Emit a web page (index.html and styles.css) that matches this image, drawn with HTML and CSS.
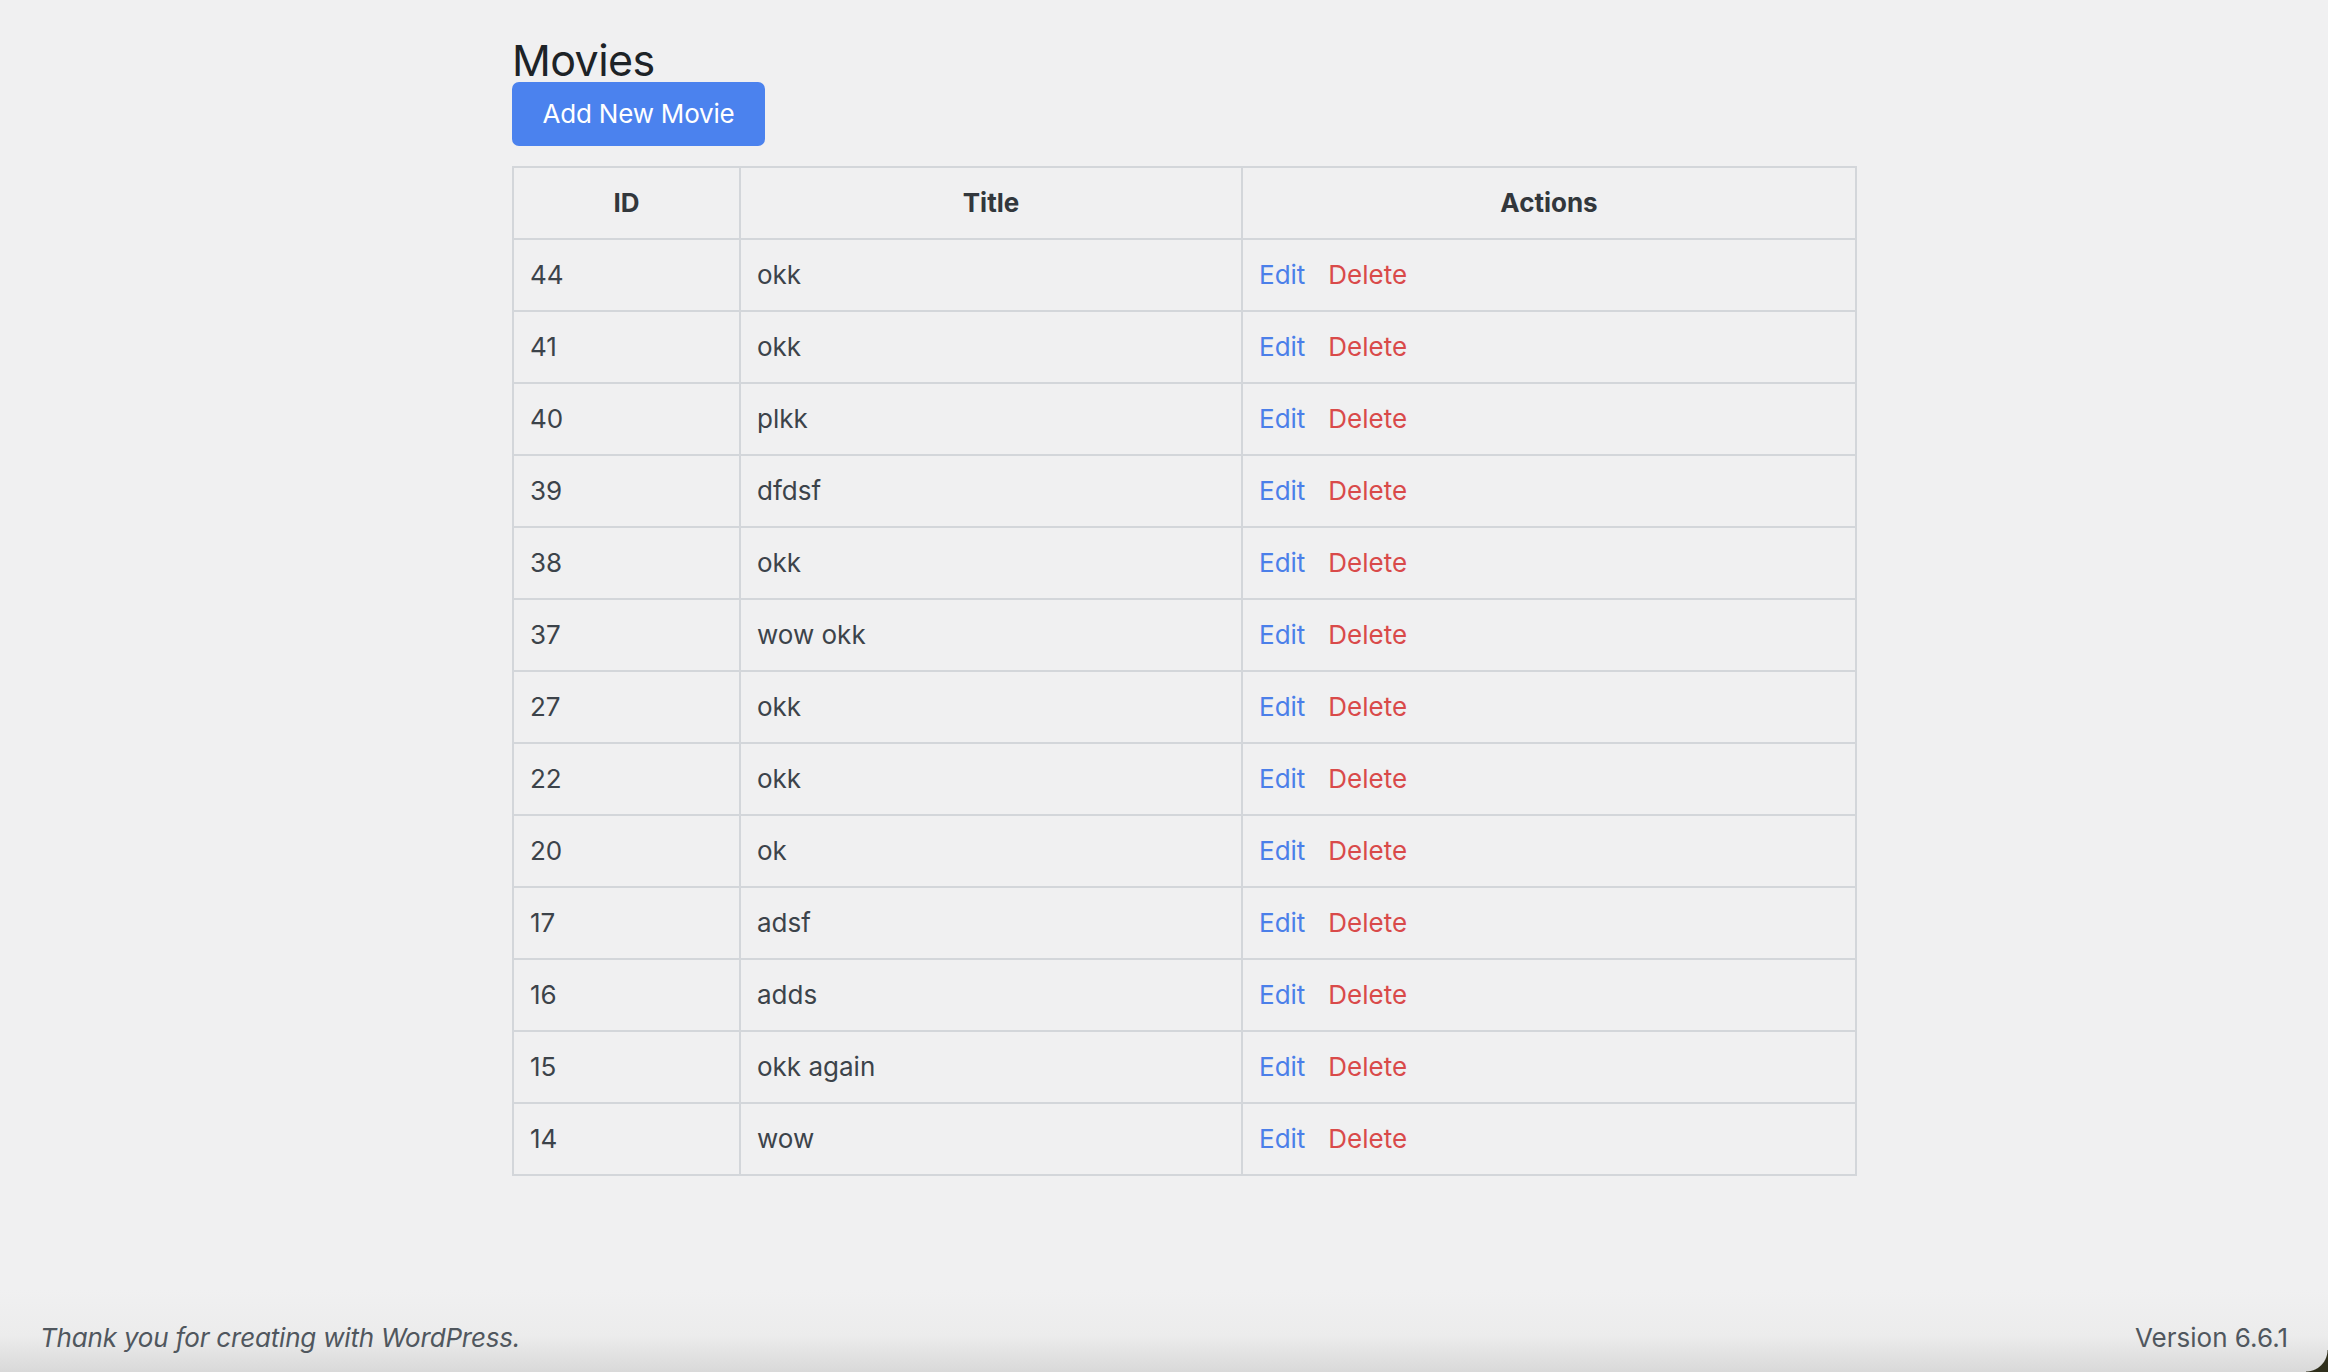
FILE: index.html
```html
<!DOCTYPE html>
<html lang="en">
<head>
<meta charset="utf-8">
<title>Movies</title>
<link rel="stylesheet" href="styles.css">
</head>
<body>
<main class="wrap">
  <h1 class="page-title">Movies</h1>
  <a class="btn-primary" href="#">Add New Movie</a>
  <table class="movies">
    <colgroup>
      <col class="c-id">
      <col class="c-title">
      <col class="c-actions">
    </colgroup>
    <thead>
      <tr><th>ID</th><th>Title</th><th>Actions</th></tr>
    </thead>
    <tbody>
      <tr><td>44</td><td>okk</td><td><a class="edit" href="#">Edit</a><a class="delete" href="#">Delete</a></td></tr>
      <tr><td>41</td><td>okk</td><td><a class="edit" href="#">Edit</a><a class="delete" href="#">Delete</a></td></tr>
      <tr><td>40</td><td>plkk</td><td><a class="edit" href="#">Edit</a><a class="delete" href="#">Delete</a></td></tr>
      <tr><td>39</td><td>dfdsf</td><td><a class="edit" href="#">Edit</a><a class="delete" href="#">Delete</a></td></tr>
      <tr><td>38</td><td>okk</td><td><a class="edit" href="#">Edit</a><a class="delete" href="#">Delete</a></td></tr>
      <tr><td>37</td><td>wow okk</td><td><a class="edit" href="#">Edit</a><a class="delete" href="#">Delete</a></td></tr>
      <tr><td>27</td><td>okk</td><td><a class="edit" href="#">Edit</a><a class="delete" href="#">Delete</a></td></tr>
      <tr><td>22</td><td>okk</td><td><a class="edit" href="#">Edit</a><a class="delete" href="#">Delete</a></td></tr>
      <tr><td>20</td><td>ok</td><td><a class="edit" href="#">Edit</a><a class="delete" href="#">Delete</a></td></tr>
      <tr><td>17</td><td>adsf</td><td><a class="edit" href="#">Edit</a><a class="delete" href="#">Delete</a></td></tr>
      <tr><td>16</td><td>adds</td><td><a class="edit" href="#">Edit</a><a class="delete" href="#">Delete</a></td></tr>
      <tr><td>15</td><td>okk again</td><td><a class="edit" href="#">Edit</a><a class="delete" href="#">Delete</a></td></tr>
      <tr><td>14</td><td>wow</td><td><a class="edit" href="#">Edit</a><a class="delete" href="#">Delete</a></td></tr>
    </tbody>
  </table>
</main>
<footer class="footer">
  <p class="thanks">Thank you for creating with WordPress.</p>
  <p class="version">Version 6.6.1</p>
</footer>
<div class="corner"></div>
</body>
</html>
```

FILE: styles.css
```css
html, body {
  margin: 0;
  padding: 0;
}
body {
  background: #f0f0f1;
  font-family: Inter, "Noto Sans", "Liberation Sans", sans-serif;
  font-size: 26px;
  line-height: 38px;
  color: #3c434a;
  min-height: 1372px;
  display: flex;
  flex-direction: column;
  position: relative;
  overflow: hidden;
}
.wrap {
  padding: 37px 0 0 512px;
  display: flex;
  flex-direction: column;
  align-items: flex-start;
}
.page-title {
  margin: 0;
  font-size: 43px;
  line-height: 45px;
  letter-spacing: -0.6px;
  font-weight: 400;
  color: #1d2327;
  padding-top: 1px;
  height: 44px;
}
.btn-primary {
  display: inline-block;
  box-sizing: border-box;
  width: 253px;
  height: 64px;
  padding: 13px 0;
  text-align: center;
  background: #4b82ee;
  color: #fff;
  border-radius: 7px;
  text-decoration: none;
  font-size: 26px;
  line-height: 38px;
  letter-spacing: -0.2px;
}
.movies {
  margin-top: 20px;
  border-collapse: collapse;
  table-layout: fixed;
  width: 1343px;
  border: 2px solid #d3d6da;
}
.c-id { width: 227px; }
.c-title { width: 502px; }
.c-actions { width: 614px; }
.movies th,
.movies td {
  border: 2px solid #d3d6da;
  padding: 16px 16px;
  height: 38px;
  text-align: left;
  vertical-align: middle;
}
.movies th {
  text-align: center;
  font-weight: 700;
  color: #32373c;
}
.movies a {
  text-decoration: none;
}
.edit {
  color: #4b7fe9;
  margin-right: 23px;
}
.delete {
  color: #d94a4a;
}
.footer {
  margin-top: auto;
  height: 82px;
  box-sizing: border-box;
  padding: 29px 40px 15px;
  display: flex;
  justify-content: space-between;
  align-items: flex-start;
  background: linear-gradient(to bottom, #f0f0f1 0%, #ececec 55%, #d9d9d9 100%);
  color: #50575e;
}
.footer p {
  margin: 0;
}
.thanks {
  font-style: italic;
  letter-spacing: -0.2px;
}
.corner {
  position: absolute;
  right: 0;
  bottom: 0;
  width: 22px;
  height: 22px;
  background: radial-gradient(circle at 0 0, transparent 21px, #2f2f1c 22px);
}
```
